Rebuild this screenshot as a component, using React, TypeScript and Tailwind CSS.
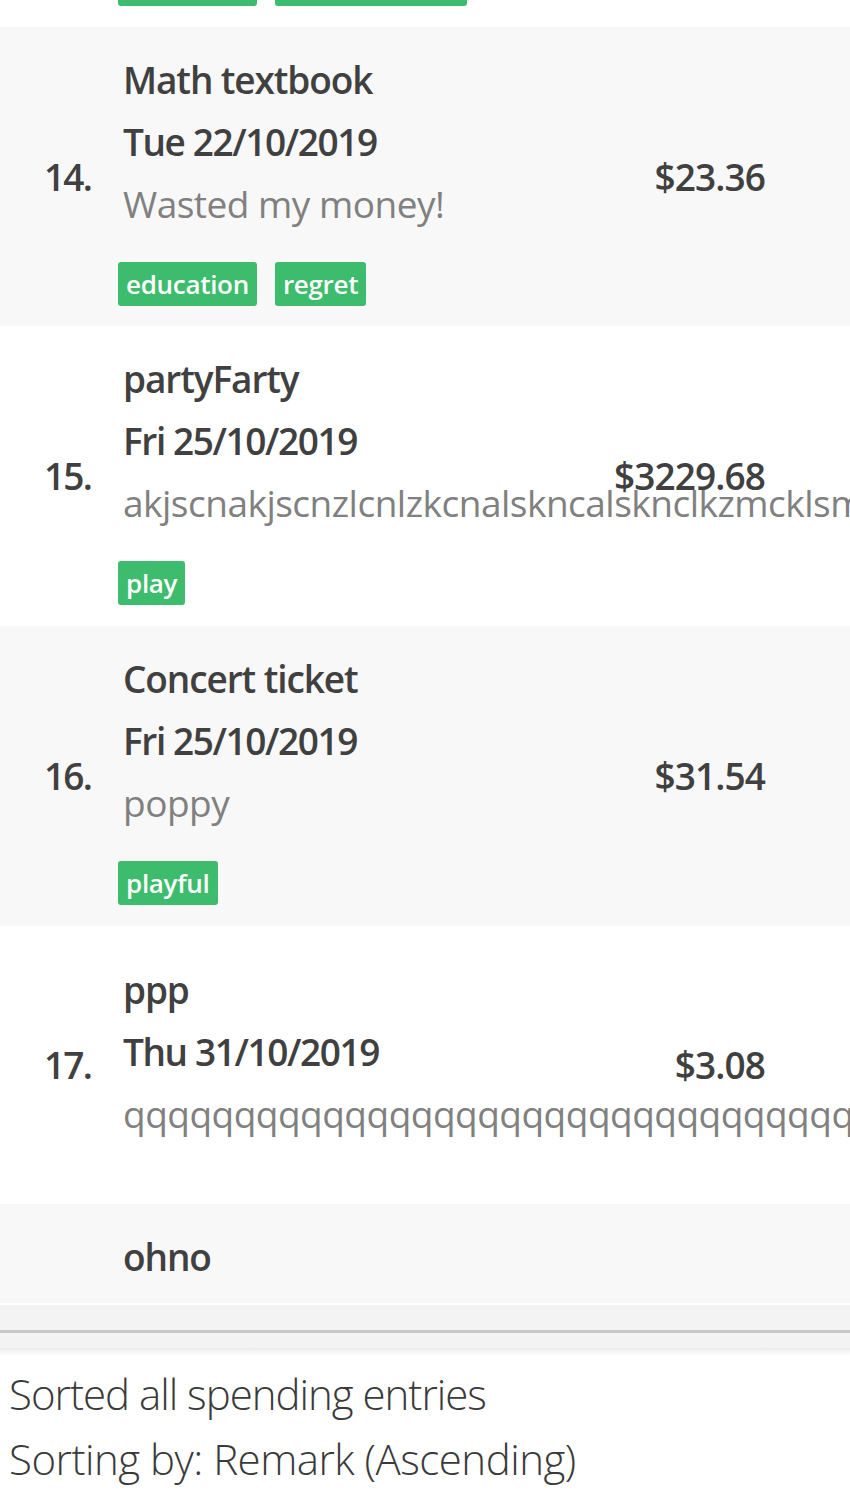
import React from "react";

type Entry = {
  idx?: string;
  title: string;
  date?: string;
  remark?: string;
  tags: string[];
  price?: string;
  bg: string;
  h: string;
  pt: string;
};

const entries: Entry[] = [
  {
    idx: "14.",
    title: "Math textbook",
    date: "Tue 22/10/2019",
    remark: "Wasted my money!",
    tags: ["education", "regret"],
    price: "$23.36",
    bg: "bg-[#f8f8f8]",
    h: "h-[299px]",
    pt: "pt-[21px]",
  },
  {
    idx: "15.",
    title: "partyFarty",
    date: "Fri 25/10/2019",
    remark: "akjscnakjscnzlcnlzkcnalskncalsknclkzmcklsmclaksmclkasmc",
    tags: ["play"],
    price: "$3229.68",
    bg: "bg-white",
    h: "h-[300px]",
    pt: "pt-[21px]",
  },
  {
    idx: "16.",
    title: "Concert ticket",
    date: "Fri 25/10/2019",
    remark: "poppy",
    tags: ["playful"],
    price: "$31.54",
    bg: "bg-[#f8f8f8]",
    h: "h-[300px]",
    pt: "pt-[21px]",
  },
  {
    idx: "17.",
    title: "ppp",
    date: "Thu 31/10/2019",
    remark: "qqqqqqqqqqqqqqqqqqqqqqqqqqqqqqqqqqqqqqqqqqqqq",
    tags: [],
    price: "$3.08",
    bg: "bg-white",
    h: "h-[278px]",
    pt: "pt-[32px]",
  },
];

const font = { fontFamily: '"Open Sans", "Noto Sans", sans-serif' };

function Tag({ label }: { label: string }) {
  return (
    <span className="h-[44px] px-[8px] rounded-[3px] bg-[#3cbc6c] text-white text-[26px] leading-[44px] font-semibold tracking-[-0.3px]">
      {label}
    </span>
  );
}

function Row({ e }: { e: Entry }) {
  return (
    <div className={`flex items-center ${e.bg} ${e.h} w-full`}>
      <div className="w-[123px] shrink-0 pl-[44px] text-[37px] leading-[62px] font-[540] text-[#404040] tracking-[-1.8px]">
        {e.idx}
      </div>
      <div className={`flex-1 min-w-0 self-start ${e.pt} flex flex-col`}>
        <div className="h-[63px] text-[37px] leading-[63px] font-[540] text-[#404040] whitespace-nowrap tracking-[-1.1px]">
          {e.title}
        </div>
        <div className="h-[62px] text-[37px] leading-[62px] font-[540] text-[#404040] whitespace-nowrap tracking-[-1.4px]">
          {e.date}
        </div>
        <div className="h-[62px] text-[37px] leading-[62px] text-[#808080] whitespace-nowrap tracking-[-0.5px]">
          {e.remark}
        </div>
        {e.tags.length > 0 && (
          <div className="mt-[27px] flex gap-[18px] -ml-[5px]">
            {e.tags.map((t) => (
              <Tag key={t} label={t} />
            ))}
          </div>
        )}
      </div>
      <div className="shrink-0 pr-[85px] text-[37px] leading-[62px] font-[540] text-[#404040] tracking-[-0.9px]">
        {e.price}
      </div>
    </div>
  );
}

export default function App() {
  return (
    <div className="w-[850px] h-[1509px] overflow-hidden bg-white" style={font}>
      {/* previous entry tail */}
      <div className="h-[27px] bg-white overflow-hidden">
        <div className="-mt-[38px] ml-[118px] flex gap-[18px]">
          <div className="h-[44px] w-[139px] rounded-[3px] bg-[#3cbc6c]" />
          <div className="h-[44px] w-[192px] rounded-[3px] bg-[#3cbc6c]" />
        </div>
      </div>
      {entries.map((e) => (
        <Row key={e.idx} e={e} />
      ))}
      {/* partial entry */}
      <div className="h-[99px] bg-[#f8f8f8] flex">
        <div className="w-[123px] shrink-0" />
        <div className="pt-[21px] text-[37px] leading-[63px] font-[540] text-[#404040] tracking-[-1.1px]">
          ohno
        </div>
      </div>
      <div className="h-[2px] bg-white" />
      {/* divider area */}
      <div className="h-[25px] bg-[#f3f3f3]" />
      <div className="h-[3px] bg-[#c8c8c8]" />
      <div className="h-[15px] bg-[#f3f3f3]" />
      <div className="h-[8px] bg-gradient-to-b from-[#ececec] to-white" />
      {/* result display */}
      <div className="pl-[9px] pt-[5px] text-[42px] leading-[65px] font-light text-[#3a3a3a]">
        <div className="tracking-[-1px]">Sorted all spending entries</div>
        <div className="tracking-[-0.5px]">Sorting by: Remark (Ascending)</div>
      </div>
    </div>
  );
}
